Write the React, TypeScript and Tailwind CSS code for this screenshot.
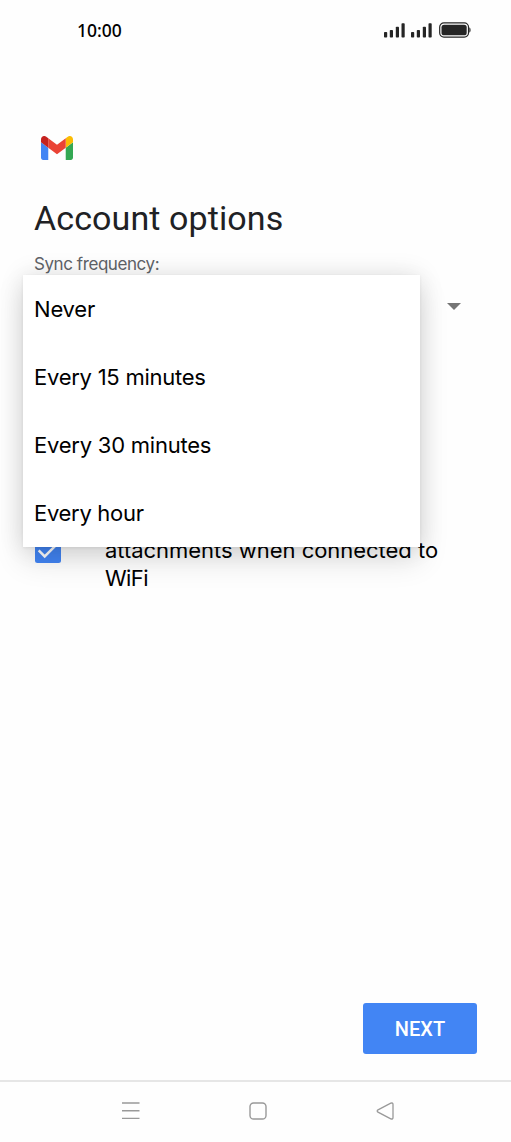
const options = [
  { label: 'Never', tracking: 'tracking-[-0.2px]' },
  { label: 'Every 15 minutes', tracking: 'tracking-[-0.25px]' },
  { label: 'Every 30 minutes', tracking: 'tracking-[-0.23px]' },
  { label: 'Every hour', tracking: 'tracking-[-0.3px]' },
];

function Signal() {
  return (
    <svg width="21" height="15" viewBox="0 0 21 15" fill="#252525">
      <rect x="0" y="9" width="3.2" height="5.6" rx="0.8" />
      <rect x="5.8" y="7" width="3.2" height="7.6" rx="0.8" />
      <rect x="11.8" y="3.8" width="3.2" height="10.8" rx="0.8" />
      <rect x="17.5" y="0.2" width="3.2" height="14.4" rx="0.8" />
    </svg>
  );
}

function StatusBar() {
  return (
    <header className="flex h-[60px] items-center justify-between pr-[40.5px] pl-[77px]">
      <span className="font-['Noto_Sans',sans-serif] text-[17.5px] leading-6 font-medium text-black">10:00</span>
      <div className="flex items-center">
        <Signal />
        <span className="w-[6px]" />
        <Signal />
        <svg className="ml-[7px]" width="32" height="16" viewBox="0 0 32 16">
          <rect x="0.7" y="0.9" width="28.8" height="14.2" rx="4.2" fill="white" stroke="#252525" strokeWidth="1.2" />
          <rect x="2.5" y="2.7" width="25.2" height="10.6" rx="2.6" fill="#252525" />
          <path d="M30.3 5.3q1.3.4 1.3 2.7t-1.3 2.7z" fill="#252525" />
        </svg>
      </div>
    </header>
  );
}

function GmailLogo() {
  return (
    <svg width="32" height="24" viewBox="52 42 88 66" preserveAspectRatio="none">
      <path fill="#4285f4" d="M58 108h14V74L52 59v43c0 3.32 2.69 6 6 6" />
      <path fill="#34a853" d="M120 108h14c3.32 0 6-2.69 6-6V59l-20 15" />
      <path fill="#fbbc04" d="M120 48v26l20-15v-8c0-7.42-8.47-11.65-14.4-7.2" />
      <path fill="#ea4335" d="M72 74V48l24 18 24-18v26L96 92" />
      <path fill="#c5221f" d="M52 51v8l20 15V48l-5.6-4.2c-5.94-4.45-14.4-.22-14.4 7.2" />
    </svg>
  );
}

export default function App() {
  return (
    <div className="flex h-[1142px] w-[511px] flex-col overflow-hidden bg-[#fefefe] font-[Inter,sans-serif] text-black">
      <StatusBar />
      <main className="relative flex flex-1 flex-col pr-[34px] pl-[34px]">
        <div className="mt-[76px] ml-[7px] h-[24px]">
          <GmailLogo />
        </div>
        <h1 className="mt-[38px] font-[Roboto,sans-serif] text-[34px] leading-10 tracking-[0.1px] whitespace-nowrap text-[#202124]">
          Account options
        </h1>
        <div className="mt-[16px] text-[17px] leading-5 font-[380] tracking-[-0.43px] text-[#5f6368]">Sync frequency:</div>
        <div className="mt-[29px] flex h-[7px] justify-end pr-[16px]">
          <svg width="14" height="7" viewBox="0 0 14 7">
            <path d="M0 0h14L7 7z" fill="#757575" />
          </svg>
        </div>
        <div className="mt-[227px] flex items-start">
          <div className="ml-px h-[26px] w-[26px] shrink-0">
            <svg width="26" height="26" viewBox="0 0 26 26">
              <rect width="26" height="26" rx="2.5" fill="#4285f4" />
              <path d="M3.7 13.4l6 6L21.5 7.6" fill="none" stroke="white" strokeWidth="2.5" />
            </svg>
          </div>
          <p className="-mt-px ml-[44px] text-[22px] leading-[28px] font-[390] whitespace-nowrap">
            <span className="tracking-[-0.03px]">attachments when connected to</span>
            <br />
            <span className="tracking-[-0.6px]">WiFi</span>
          </p>
        </div>
        <button className="mt-auto mb-[26px] h-[51px] w-[114px] self-end rounded-[3px] bg-[#4285f4] font-[Roboto,sans-serif] text-[20px] font-medium text-white">
          NEXT
        </button>

        <ul className="absolute top-[215px] left-[23px] h-[272px] w-[397px] bg-white shadow-[0_14px_28px_rgba(0,0,0,0.12),0_0_24px_rgba(0,0,0,0.11),0_1px_3px_rgba(0,0,0,0.07)]">
          {options.map((option) => (
            <li key={option.label} className={`flex h-[68px] items-center pl-[11px] text-[22px] font-[390] ${option.tracking}`}>
              {option.label}
            </li>
          ))}
        </ul>
      </main>
      <nav className="flex h-[62px] items-center border-t-2 border-[#e6e6e6] pb-[2px] pl-[121px]">
        <svg width="19" height="20" viewBox="0 0 19 20" stroke="#999" strokeWidth="1.4">
          <path d="M1 2h17.5M1 9.7h17.5M1 17.4h17.5" />
        </svg>
        <svg className="ml-[109px]" width="18" height="18" viewBox="0 0 18 18" fill="none" stroke="#999" strokeWidth="1.4">
          <rect x="1" y="1" width="16" height="16" rx="3.6" />
        </svg>
        <svg className="ml-[109px]" width="18" height="18" viewBox="0 0 18 18" fill="none" stroke="#999" strokeWidth="1.3">
          <path d="M2 7.8 14.8 1.2Q17 .4 17 2.6v12.8q0 2.2-2.2 1.4L2 10.2Q.4 9 2 7.8z" />
        </svg>
      </nav>
    </div>
  );
}
